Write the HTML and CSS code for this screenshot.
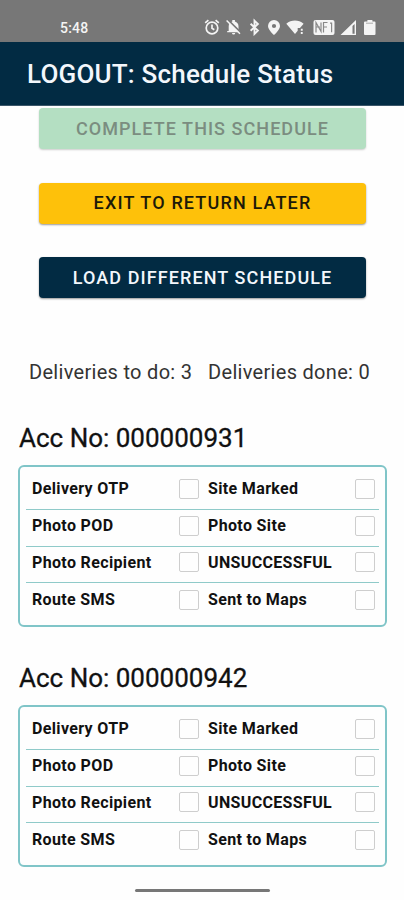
FILE: index.html
```html
<!DOCTYPE html>
<html lang="en">
<head>
<meta charset="utf-8">
<title>Schedule Status</title>
<link rel="stylesheet" href="styles.css">
</head>
<body>
<div class="statusbar">
  <span class="clock">5:48</span>
  <svg class="icons" width="174" height="18" viewBox="0 0 174 18" fill="#f4f4f4">
    <g fill="none" stroke="#f4f4f4" stroke-width="1.7">
      <circle cx="8" cy="10" r="5.8"/><path d="M8 6.4v3.8l2.3 1.5M1.2 4.9l3.2-2.8M14.8 4.9l-3.2-2.8"/>
    </g>
    <path d="M24.7 13V8.2c0-2.4 1.4-4.2 3.6-4.8V2h2.6v1.4c2.2.6 3.6 2.4 3.6 4.8v3.4l1.5 1.4v1.2H23.2v-1.2zM28 15h3.2a1.6 1.6 0 0 1-3.2 0z"/>
    <path d="M23.6 1.8l13.2 13" stroke="#777" stroke-width="2.2"/>
    <path d="M22.6 2.5l13.4 13.3" stroke="#f4f4f4" stroke-width="1.5"/>
    <path d="M46.6 5.8l7.3 6.8-3.4 3.3V2.7l3.4 3.3-7.3 6.8" fill="none" stroke="#f4f4f4" stroke-width="1.9"/>
    <path fill-rule="evenodd" d="M70 2.1a6 6 0 0 0-6 5.9c0 3.9 6 9 6 9s6-5.1 6-9a6 6 0 0 0-6-5.9zm0 3.8a2.1 2.1 0 1 1 0 4.2 2.1 2.1 0 0 1 0-4.2z"/>
    <path d="M82.3 5.8c5-4.3 12.3-4.3 17.3 0L96 10h-2.3v2.8L91 16zM96.8 10.8h1.9v1.9h-1.9zM96.8 14h1.9v1.9h-1.9z"/>
    <rect x="109.5" y="2" width="21" height="15" rx="2"/>
    <path d="M112 14.5v-10l5 9v-9M119.5 14.5v-10h4M119.5 9h3.5M126 5.2h1.6v9M112 9h4" fill="none" stroke="#888" stroke-width="1.2"/>
    <path fill-rule="evenodd" d="M152 2v15h-15.5zm-1.4 4l-2.1 2v7.7h2.1z"/>
    <path d="M161 3.5h2.4V2h5v1.5h2.1q1 0 1 1v11.5q0 1-1 1H161q-1 0-1-1V4.5q0-1 1-1z"/><path d="M162 5.2h7" stroke="#aaa" stroke-width="1"/>
  </svg>
</div>
<header class="appbar"><h1>LOGOUT: Schedule Status</h1></header>
<main>
  <div class="actions">
    <button class="btn complete" disabled><span>COMPLETE THIS SCHEDULE</span></button>
    <button class="btn exit"><span>EXIT TO RETURN LATER</span></button>
    <button class="btn load"><span>LOAD DIFFERENT SCHEDULE</span></button>
  </div>
  <div class="totals"><span>Deliveries to do: 3</span><span>Deliveries done: 0</span></div>
  <section class="account">
    <h2>Acc No: 000000931</h2>
    <div class="panel">
      <div class="row"><span>Delivery OTP</span><i class="box"></i><span>Site Marked</span><i class="box"></i></div>
      <div class="row"><span>Photo POD</span><i class="box"></i><span>Photo Site</span><i class="box"></i></div>
      <div class="row"><span>Photo Recipient</span><i class="box"></i><span>UNSUCCESSFUL</span><i class="box"></i></div>
      <div class="row"><span>Route SMS</span><i class="box"></i><span>Sent to Maps</span><i class="box"></i></div>
    </div>
  </section>
  <section class="account">
    <h2>Acc No: 000000942</h2>
    <div class="panel">
      <div class="row"><span>Delivery OTP</span><i class="box"></i><span>Site Marked</span><i class="box"></i></div>
      <div class="row"><span>Photo POD</span><i class="box"></i><span>Photo Site</span><i class="box"></i></div>
      <div class="row"><span>Photo Recipient</span><i class="box"></i><span>UNSUCCESSFUL</span><i class="box"></i></div>
      <div class="row"><span>Route SMS</span><i class="box"></i><span>Sent to Maps</span><i class="box"></i></div>
    </div>
  </section>
</main>
<div class="homebar"></div>
</body>
</html>
```
FILE: styles.css
```css
* { box-sizing: border-box; }
body {
  margin: 0;
  width: 404px;
  height: 900px;
  overflow: hidden;
  background: #fefefe;
  color: #111;
  font-family: Roboto, "Liberation Sans", sans-serif;
}
h1, h2 { margin: 0; font-weight: 500; white-space: nowrap; }
.statusbar {
  height: 42px;
  padding: 18px 26px 0 60px;
  display: flex;
  justify-content: space-between;
  background: #777;
  color: #f4f4f4;
}
.clock { font-size: 14px; line-height: 20px; font-weight: 500; letter-spacing: .2px; }
.icons { display: block; }
.appbar {
  height: 64px;
  padding-left: 27px;
  background: #022b43;
  border-bottom: 1px solid #3b5669;
  color: #f3f7fc;
}
.appbar h1 { font-size: 26px; line-height: 65px; letter-spacing: .2px; }
.actions { display: grid; gap: 33.5px; padding: 2px 38px 0 39px; }
.btn {
  height: 41px;
  padding: 0;
  border: 0;
  border-radius: 4px;
  box-shadow: 0 1px 2px rgba(0, 0, 0, .4);
  font: 500 18px/40px Roboto, "Liberation Sans", sans-serif;
  letter-spacing: 1.05px;
  white-space: nowrap;
}
.complete { background: #b4dfc2; color: #7b8d80; box-shadow: 0 1px 2px rgba(0, 0, 0, .2); }
.exit { background: #fec10a; color: #1d1a08; letter-spacing: 1.15px; }
.load { background: #022b43; color: #f3f7fc; letter-spacing: 1.1px; line-height: 39px; }
.totals {
  display: flex;
  justify-content: space-between;
  margin: 58px 34px 0 29px;
  height: 32px;
  font-size: 20px;
  line-height: 32px;
  letter-spacing: .3px;
  color: #333;
  white-space: nowrap;
}
.account { height: 240px; padding: 34px 17px 0 18px; }
.account h2 { height: 43px; font-size: 26px; line-height: 32px; font-weight: 400; padding-left: 1px; -webkit-text-stroke: .3px #111; }
.panel {
  height: 162px;
  padding: 6px 6px 0;
  border: 2px solid #80c5c8;
  border-radius: 6px;
}
.row {
  display: grid;
  grid-template-columns: 147px 29px 147px 20px;
  align-items: center;
  height: 36.8px;
  padding: 0 0 4px 6px;
  border-bottom: 1px solid #8fcac9;
  font-size: 16px;
  font-weight: 700;
  letter-spacing: .35px;
  white-space: nowrap;
}
.row:last-child { border-bottom: 0; }
.box { width: 20px; height: 20px; border: 1.5px solid #cecece; border-radius: 2px; }
.homebar { width: 135px; height: 3px; margin: 21px auto 0; border-radius: 2px; background: #777; }
```
